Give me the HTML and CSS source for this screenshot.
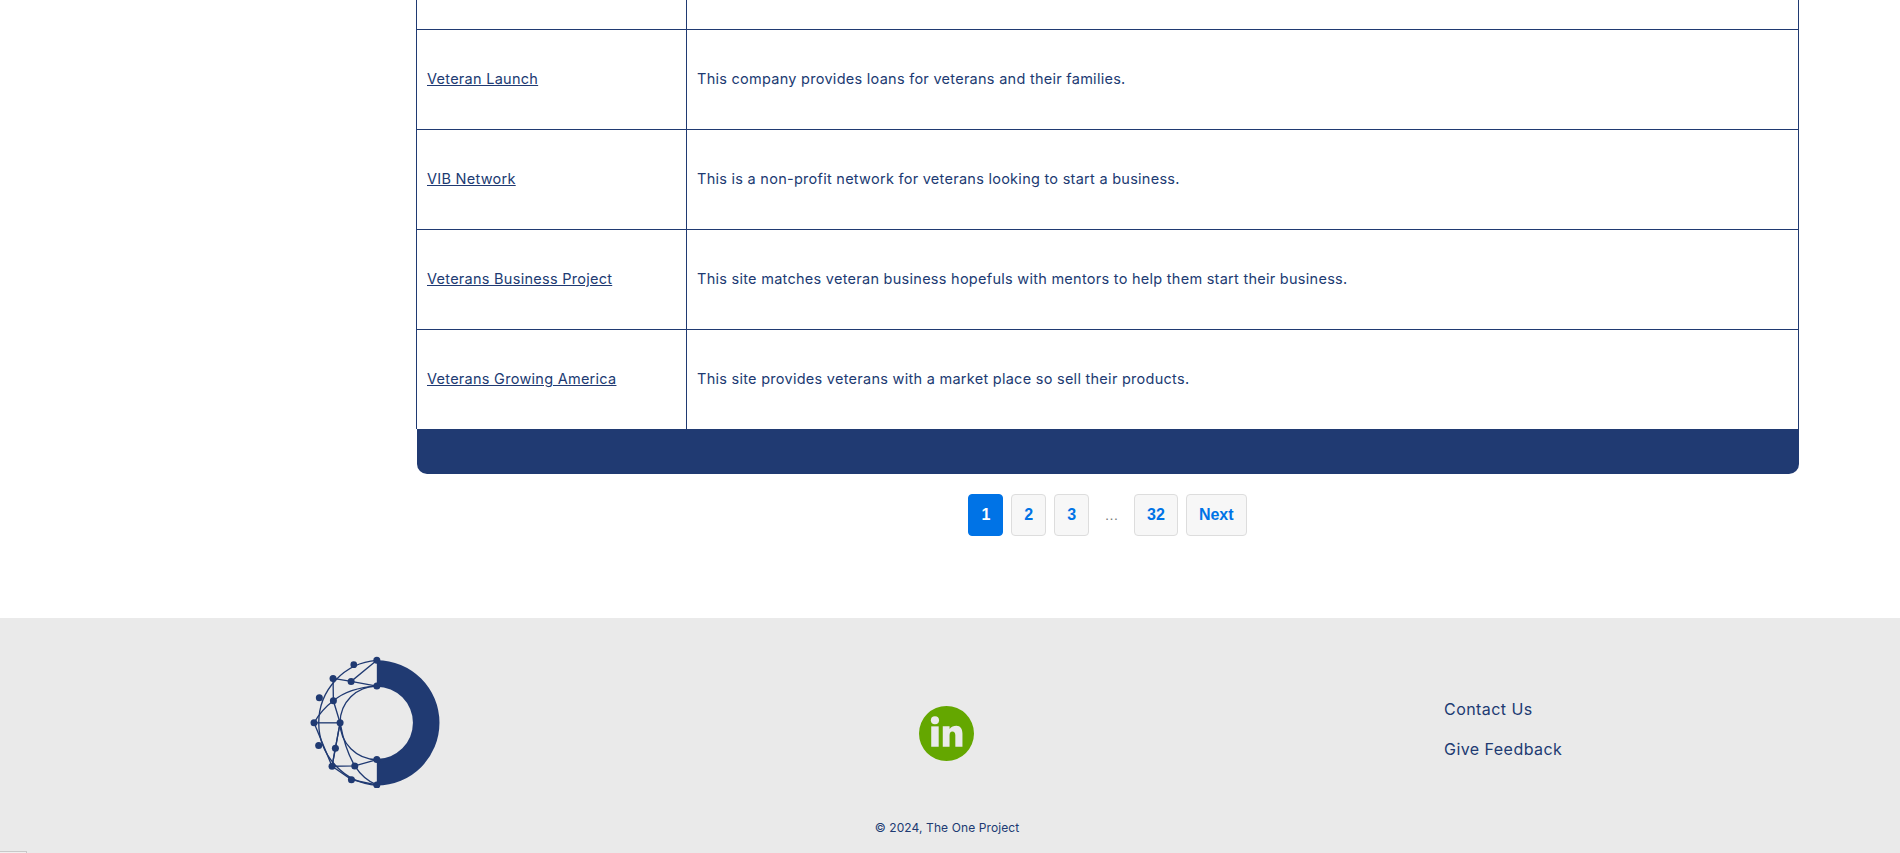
FILE: index.html
```html
<!DOCTYPE html>
<html lang="en">
<head>
  <meta charset="UTF-8" />
  <meta name="viewport" content="width=device-width, initial-scale=1.0" />
  <title>Veteran Resources - The One Project</title>
  <link rel="stylesheet" href="styles.css">
</head>
<body>
  <main class="content">
    <table class="resources">
      <tbody>
        <tr class="row-cut"><td></td><td></td></tr>
        <tr>
          <td><a href="#">Veteran Launch</a></td>
          <td>This company provides loans for veterans and their families.</td>
        </tr>
        <tr>
          <td><a href="#">VIB Network</a></td>
          <td>This is a non-profit network for veterans looking to start a business.</td>
        </tr>
        <tr>
          <td><a href="#">Veterans Business Project</a></td>
          <td>This site matches veteran business hopefuls with mentors to help them start their business.</td>
        </tr>
        <tr>
          <td><a href="#">Veterans Growing America</a></td>
          <td>This site provides veterans with a market place so sell their products.</td>
        </tr>
      </tbody>
    </table>
    <div class="table-foot"></div>

    <nav class="pagination">
      <a href="#" class="page current">1</a>
      <a href="#" class="page">2</a>
      <a href="#" class="page">3</a>
      <span class="dots">…</span>
      <a href="#" class="page">32</a>
      <a href="#" class="page">Next</a>
    </nav>
  </main>

  <footer class="site-footer">
    <div class="footer-row">
      <a href="#" class="footer-logo">
        <svg viewBox="60 50 395 395" width="132" height="132" aria-label="The One Project">
          <path class="ring" d="M260 62.5A187.5 187.5 0 0 1 260 437.5V358A108 108 0 0 0 260 142Z"/>
          <g class="mesh">
            <path d="M260 63A187.5 187.5 0 0 0 260 437"/>
            <path d="M260 140A110 110 0 0 0 260 360"/>
            <path d="M260 63L183 126L260 140"/>
            <path d="M129 117L183 126"/>
            <path d="M129 117L130 184L150 250L136 326L126 380"/>
            <path d="M72 250H150"/>
            <path d="M72 250Q95 210 130 184Q175 145 260 140"/>
            <path d="M72 250L126 380L194 379L260 360"/>
            <path d="M150 250L126 380"/>
            <path d="M150 250Q165 330 194 379Q220 420 260 436"/>
            <path d="M126 380L184 420L260 436"/>
          </g>
          <g class="nodes">
            <circle cx="260" cy="63" r="10.5"/>
            <circle cx="191" cy="76" r="10"/>
            <circle cx="129" cy="117" r="10.5"/>
            <circle cx="183" cy="126" r="10.5"/>
            <circle cx="260" cy="140" r="10.5"/>
            <circle cx="88" cy="175" r="10.5"/>
            <circle cx="130" cy="184" r="10.5"/>
            <circle cx="72" cy="250" r="10.5"/>
            <circle cx="150" cy="250" r="10.5"/>
            <circle cx="86" cy="318" r="10.5"/>
            <circle cx="136" cy="326" r="10.5"/>
            <circle cx="126" cy="380" r="10.5"/>
            <circle cx="194" cy="379" r="10.5"/>
            <circle cx="260" cy="360" r="10.5"/>
            <circle cx="184" cy="420" r="10.5"/>
            <circle cx="260" cy="436" r="10.5"/>
          </g>
        </svg>
      </a>
      <a href="#" class="footer-social" aria-label="LinkedIn">
        <svg viewBox="58 48 162 162" width="55" height="55">
          <circle cx="139" cy="129" r="81" fill="#64a700"/>
          <g fill="#eaeaea">
            <circle cx="105" cy="90" r="12"/>
            <rect x="94" y="108" width="22" height="60"/>
            <path d="M128 108H148V116C153 109 160 106 168 106C180 106 186 115 186 130V168H165V134C165 127 162 123 156 123C151 123 148 127 148 134V168H128Z"/>
          </g>
        </svg>
      </a>
      <ul class="footer-links">
        <li><a href="#">Contact Us</a></li>
        <li><a href="#">Give Feedback</a></li>
      </ul>
    </div>
    <p class="copyright">© 2024, The One Project</p>
  </footer>

  <div class="corner-tab"></div>
</body>
</html>
```

FILE: styles.css
```css
body {
  margin: 0;
  background: #fff;
  color: #203a72;
  font-family: Inter, "Noto Sans", sans-serif;
  overflow: hidden;
}

a {
  color: inherit;
}

.content {
  padding-left: 416px;
  width: 1383px;
}

.resources {
  width: 1383px;
  table-layout: fixed;
  border-collapse: separate;
  border-spacing: 0;
  border-left: 1px solid #203a72;
  font-size: 14.5px;
  letter-spacing: 0.27px;
}

.resources td {
  height: 100px;
  box-sizing: border-box;
  padding: 0 10px 2px;
  border-right: 1px solid #203a72;
  border-bottom: 1px solid #203a72;
}

.resources td:first-child {
  width: 270px;
  box-sizing: border-box;
}

.resources .row-cut td {
  height: 30px;
}

.resources tr:last-child td {
  border-bottom: 0;
  height: 99px;
}

.table-foot {
  height: 45px;
  margin-left: 1px;
  background: #203a72;
  border-radius: 0 0 10px 10px;
}

.pagination {
  display: flex;
  justify-content: center;
  gap: 8px;
  margin-top: 20px;
  font-family: "Liberation Sans", Arial, sans-serif;
  font-size: 16px;
  font-weight: 700;
}

.page {
  min-width: 33px;
  box-sizing: border-box;
  height: 42px;
  padding: 0 12px;
  display: flex;
  align-items: center;
  justify-content: center;
  background: #f7f7f7;
  border: 1px solid #ddd;
  border-radius: 4px;
  color: #0073e6;
  text-decoration: none;
}

.page.current {
  background: #0073e6;
  border-color: #0073e6;
  color: #fff;
}

.dots {
  width: 29px;
  display: flex;
  align-items: center;
  justify-content: center;
  color: #777;
  font-size: 14px;
  font-weight: 400;
}

.site-footer {
  margin-top: 82px;
  height: 235px;
  background: #eaeaea;
  padding-top: 38px;
  box-sizing: border-box;
}

.footer-row {
  display: grid;
  grid-template-columns: 609px 525px 1fr;
  padding-left: 310px;
  height: 132px;
}

.footer-logo svg,
.footer-social svg {
  display: block;
}

.ring {
  fill: #203a72;
}

.mesh {
  fill: none;
  stroke: #203a72;
  stroke-width: 4;
}

.nodes {
  fill: #203a72;
}

.footer-social {
  margin-top: 50px;
}

.footer-links {
  list-style: none;
  margin: 43px 0 0;
  padding: 0;
  font-size: 16px;
  line-height: 20px;
  letter-spacing: 0.45px;
}

.footer-links li {
  margin-bottom: 20px;
}

.footer-links a {
  text-decoration: none;
}

.copyright {
  margin: 32px 0 0;
  padding-right: 6px;
  text-align: center;
  font-size: 12px;
  line-height: 16px;
  letter-spacing: 0.1px;
}

.corner-tab {
  position: fixed;
  left: 0;
  bottom: 0;
  width: 26px;
  height: 1px;
  border: 1px solid #c8c8c8;
  border-left: 0;
  border-bottom: 0;
  background: #f0f0f0;
}
```
